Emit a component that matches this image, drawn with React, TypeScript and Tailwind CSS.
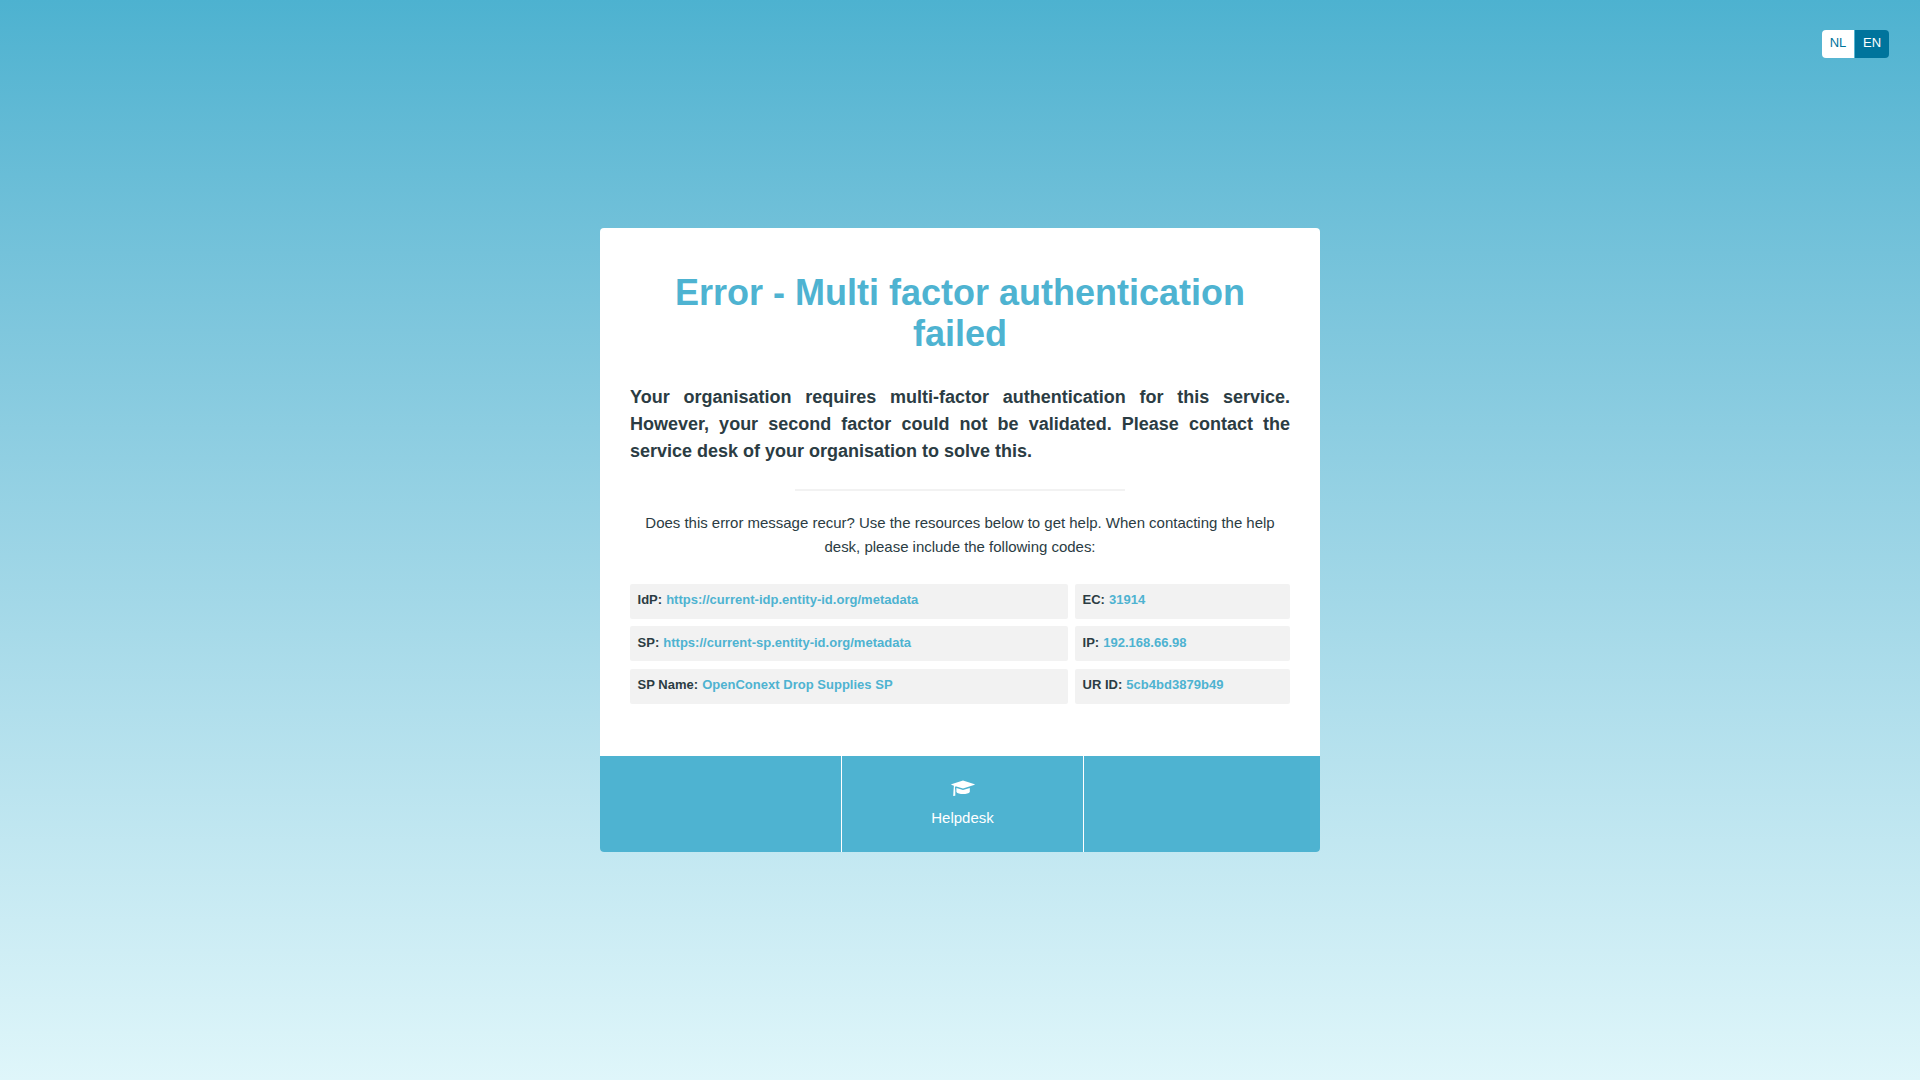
const codes = [
  { label: 'IdP:', value: 'https://current-idp.entity-id.org/metadata' },
  { label: 'EC:', value: '31914' },
  { label: 'SP:', value: 'https://current-sp.entity-id.org/metadata' },
  { label: 'IP:', value: '192.168.66.98' },
  { label: 'SP Name:', value: 'OpenConext Drop Supplies SP' },
  { label: 'UR ID:', value: '5cb4bd3879b49' },
];

function LanguageSwitch() {
  return (
    <nav className="mt-[30px] mr-[31px] flex h-7 self-end overflow-hidden rounded text-[13px] leading-[25px]">
      <a className="w-8 bg-white text-center text-[#00749c]">NL</a>
      <a className="ml-px w-[34px] bg-[#00749c] text-center text-white">EN</a>
    </nav>
  );
}

function GraduationCap() {
  return (
    <svg className="h-4 w-6" viewBox="0 0 24 16" fill="#fff">
      <path d="M12 .4 23.7 4.2V4.8L12 8.600 4.600 6.300 3.900 7.400 4.300 10.500V15.700L2.200 16 2.500 10.500 2.900 5.700 0.300 4.800V4.200Z" />
      <path d="M5.400 7.900 12 9.900 18.800 7.900V12C17.200 14.800 7 14.800 5.400 12Z" />
    </svg>
  );
}

export default function App() {
  return (
    <div className="flex h-[1080px] flex-col bg-linear-to-b from-[#4db2d0] to-[#dff6fa] font-['Liberation_Sans',Arial,sans-serif] text-[#2b3c43]">
      <LanguageSwitch />
      <main className="mx-auto mt-[170px] flex h-[624px] w-[720px] flex-col overflow-hidden rounded bg-white">
        <div className="flex h-[528px] flex-col px-[30px] pt-[44px]">
          <h1 className="text-center text-[36px] leading-[41px] font-bold text-[#4eb3d1]">
            Error - Multi factor authentication failed
          </h1>
          <p className="mt-[30px] text-justify text-[18px] leading-[27px] font-bold">
            Your organisation requires multi-factor authentication for this service. However, your
            second factor could not be validated. Please contact the service desk of your
            organisation to solve this.
          </p>
          <hr className="mx-auto mt-6 w-[330px] border-t-2 border-[#f2f2f2]" />
          <p className="mt-5 text-center text-[15px] leading-6 tracking-[-0.02px]">
            Does this error message recur? Use the resources below to get help. When contacting the
            help desk, please include the following codes:
          </p>
          <dl className="mt-[24.9px] grid grid-cols-[438px_215px] gap-x-[7px] gap-y-[7.5px] text-[13px] leading-[31px] font-bold tracking-[0.02px]">
            {codes.map((c) => (
              <div
                key={c.label}
                className="flex h-[35px] gap-1 rounded-xs bg-[#f2f2f2] px-[7.5px] pt-[0.2px]"
              >
                <dt>{c.label}</dt>
                <dd className="text-[#4eb3d1]">{c.value}</dd>
              </div>
            ))}
          </dl>
        </div>
        <footer className="grid h-24 grid-cols-[242px_242px_236px] bg-[#4eb3d1] text-[15px] text-white">
          <div className="border-r border-white" />
          <a className="flex flex-col items-center border-r border-white pt-6">
            <GraduationCap />
            <span className="mt-2.5 leading-6">Helpdesk</span>
          </a>
          <div />
        </footer>
      </main>
    </div>
  );
}
